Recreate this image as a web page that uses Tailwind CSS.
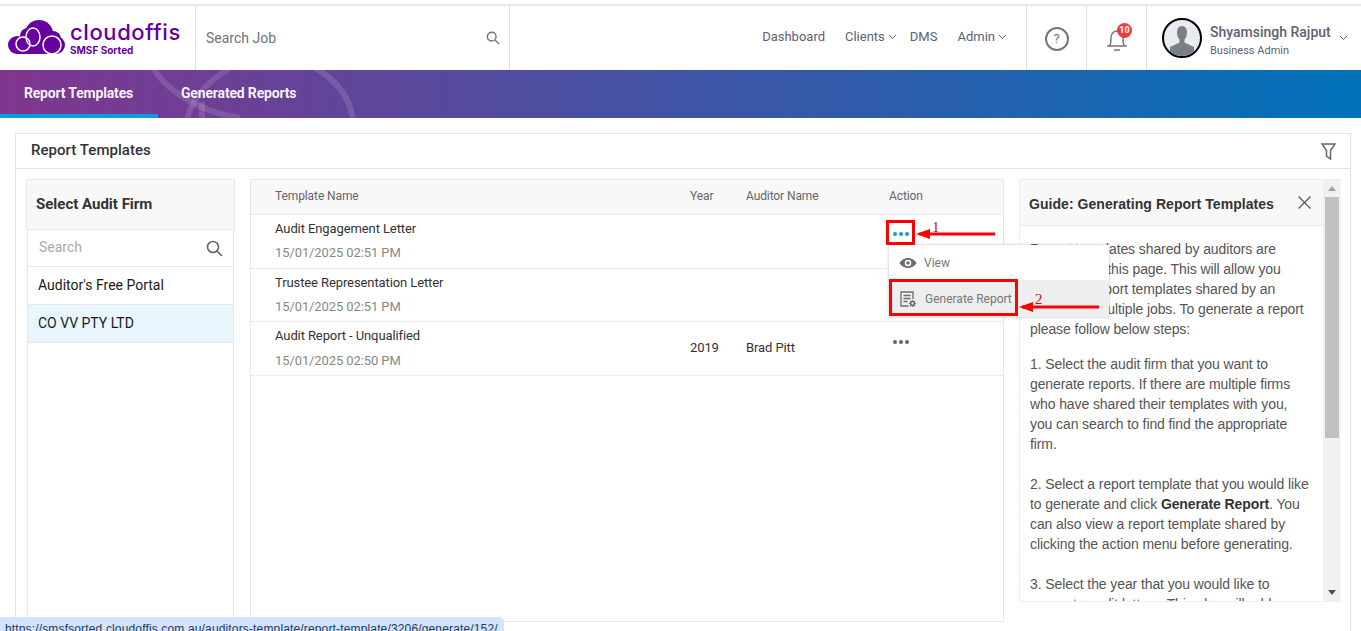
<!DOCTYPE html>
<html><head><meta charset="utf-8"><script src="https://cdn.jsdelivr.net/npm/@tailwindcss/browser@4"></script></head>
<body class="bg-white overflow-hidden font-['Roboto',sans-serif]">
<div class="relative w-[1361px] h-[631px] overflow-hidden bg-white">
  <div class="h-[6px] border-b-2 border-[#e5e5e5]"></div>
  <header class="h-[64px] flex items-stretch">
    <div class="w-[196px] border-r border-[#e0e0e0] flex items-center pl-[8px] relative">
      <svg width="58" height="36" viewBox="0 0 58 36" class="shrink-0 mt-[-3px]">
        <g fill="#6600a1"><circle cx="9" cy="26" r="9"/><circle cx="20" cy="17" r="8"/><circle cx="31" cy="15" r="14"/><circle cx="45" cy="20" r="8"/><circle cx="48" cy="26" r="9"/><rect x="9" y="22" width="39" height="13"/></g>
        <g fill="none" stroke="#fff" stroke-width="1.500"><circle cx="15" cy="25" r="7"/><ellipse cx="25" cy="18" rx="7" ry="9"/><circle cx="44" cy="26" r="9"/></g>
      </svg>
      <div class="ml-[4px] mt-[-1px]">
        <div class="text-[22px] leading-[24px] tracking-[0.6px] font-medium text-[#6600a1] font-['Inter',sans-serif]">cloudoffis</div>
        <div class="text-[10px] leading-[11px] mt-[1px] font-bold text-[#6600a1] font-['Inter',sans-serif]">SMSF Sorted</div>
      </div>
    </div>
    <div class="w-[314px] border-r border-[#e0e0e0] flex items-center justify-between pl-[10px] pr-[9px] text-[14px] text-[#6b7280]">
      <span>Search Job</span>
      <svg width="14" height="14" viewBox="0 0 16 16" fill="none" stroke="#6b7280" stroke-width="1.600"><circle cx="6.500" cy="6.500" r="5"/><path d="M10.500 10.500 15 15"/></svg>
    </div>
    <nav class="flex-1 flex items-center justify-end text-[13px] text-[#5c6273] pr-[19px] pb-[2px]">
      <span>Dashboard</span>
      <span class="ml-[20px] flex items-center gap-[3px]">Clients<svg width="9" height="6" viewBox="0 0 9 6" fill="none" stroke="#5c6273"><path d="M1 1l3.500 3.500L8 1"/></svg></span>
      <span class="ml-[13px]">DMS</span>
      <span class="ml-[20px] flex items-center gap-[3px]">Admin<svg width="9" height="6" viewBox="0 0 9 6" fill="none" stroke="#5c6273"><path d="M1 1l3.500 3.500L8 1"/></svg></span>
    </nav>
    <div class="w-[61px] border-x border-[#e0e0e0] flex items-center justify-center">
      <div class="w-[24px] h-[24px] rounded-full border-2 border-[#777] flex items-center justify-center text-[13px] text-[#777] mt-[2px]">?</div>
    </div>
    <div class="w-[60px] border-r border-[#e0e0e0] flex items-center justify-center relative">
      <svg class="mt-[2px]" width="22" height="26" viewBox="0 0 22 26" fill="none" stroke="#777" stroke-width="1.500"><path d="M1 20h20M3.500 20c1.500-2 1.500-4 1.500-8 0-4 2.500-7 6-7s6 3 6 7c0 4 0 6 1.500 8"/><path d="M8 24h6"/></svg>
      <span class="absolute left-[30px] top-[17px] w-[15px] h-[15px] rounded-full bg-[#ef3b3b] text-white text-[9px] font-bold flex items-center justify-center">10</span>
    </div>
    <div class="w-[214px] flex items-center pl-[15px]">
      <div class="w-[40px] h-[40px] rounded-full border-2 border-black bg-[#e9ebee] overflow-hidden shrink-0">
        <svg viewBox="0 0 36 36" class="w-full h-full"><path d="M18 6c-3.500 0-5 3-5 6.500 0 3 1 5.500 2.500 7v3L6 27v9h24v-9l-9.500-4.500v-3c1.500-1.500 2.500-4 2.500-7C23 9 21.500 6 18 6z" fill="#7a8087"/></svg>
      </div>
      <div class="ml-[8px] w-[129px] pt-[4px]">
        <div class="text-[14px] leading-[18px] font-medium text-[#5c6273] whitespace-nowrap">Shyamsingh Rajput</div>
        <div class="text-[11px] leading-[14px] mt-[3px] text-[#5c6273]">Business Admin</div>
      </div>
      <svg width="9" height="6" viewBox="0 0 9 6" fill="none" stroke="#5c6273"><path d="M1 1l3.500 3.500L8 1"/></svg>
    </div>
  </header>
  <div class="relative h-[48px] flex overflow-hidden bg-[linear-gradient(to_right,#80368f,#0071b9)]">
    <svg class="absolute left-[130px] top-0" width="240" height="48" fill="none" stroke="#fff" stroke-opacity=".13" stroke-width="6"><path d="M23-2C38 22 70 42 110 48"/><path d="M57 50C62 26 80 10 100-2"/><path d="M72 50V32"/><path d="M185-2C206 10 220 28 223 50"/></svg>
    <div class="relative w-[158px] h-full flex items-center justify-center border-b-4 border-[#0a9be2] text-[14px] font-bold text-white/95 tracking-[-0.17px]"><span class="mt-[3px] ml-[-1px]">Report Templates</span></div>
    <div class="relative ml-[23px] h-full flex items-center text-[14px] font-bold text-white/95 tracking-[-0.17px]"><span class="mt-[-2px]">Generated Reports</span></div>
  </div>
  <main class="mt-[15px] ml-[15px] w-[1336px] h-[520px] border border-[#e2e2e2]">
    <div class="h-[35px] border-b border-[#e2e2e2] flex items-center justify-between pl-[15px] pr-[14px]">
      <span class="text-[15px] font-medium text-[#333] mt-[-2px] tracking-[0.05px]">Report Templates</span>
      <svg width="15" height="17" viewBox="0 0 15 17" fill="none" stroke="#666" stroke-width="1.500"><path d="M1 1h13L9.500 7.500V16l-4-3V7.500z"/></svg>
    </div>
    <div class="flex items-start pt-[10px] pl-[10px]">
      <aside class="w-[209px] h-[460px] shrink-0">
        <div class="h-[51px] bg-[#f8f8f8] border border-[#e9e9e9] flex items-center pl-[9px] text-[15px] font-bold text-[#333]">Select Audit Firm</div>
        <div class="ml-[1px] w-[207px] h-[409px] border-x border-[#e7e7ec]">
          <div class="h-[37px] border-b border-[#e7e7ec] flex items-center justify-between pl-[11px] pr-[10px] text-[14px] text-[#aaa]">
            <span class="mt-[-2px]">Search</span>
            <svg width="17" height="17" viewBox="0 0 17 17" fill="none" stroke="#5f6670" stroke-width="1.600"><circle cx="7" cy="7" r="5.500"/><path d="M11 11l5 5"/></svg>
          </div>
          <div class="h-[38px] border-b border-[#e7e7ec] flex items-center pl-[10px] text-[14px] text-[#1a1a1a]">Auditor's Free Portal</div>
          <div class="h-[38px] border-b border-[#e7e7ec] bg-[#eaf6fd] flex items-center pl-[10px] text-[14px] text-[#1a1a1a]">CO VV PTY LTD</div>
        </div>
      </aside>
      <section class="ml-[15px] w-[754px] h-[443px] border border-[#e7e7e7] shrink-0 tracking-[-0.1px]">
        <div class="h-[35px] bg-[#f8f8f8] border-b border-[#e9e9e9] flex items-center text-[12px] text-[#666] pb-[2px]">
          <span class="ml-[24px] w-[415px]">Template Name</span><span class="w-[56px]">Year</span><span class="w-[143px]">Auditor Name</span><span>Action</span>
        </div>
        <div class="h-[54px] border-b border-dotted border-[#ddd] pl-[24px] pt-[6px]">
          <div class="text-[13px] leading-[16px] text-[#333]">Audit Engagement Letter</div>
          <div class="text-[13px] leading-[16px] mt-[8px] text-[#888]">15/01/2025 02:51 PM</div>
        </div>
        <div class="h-[53px] border-b border-dotted border-[#ddd] pl-[24px] pt-[6px]">
          <div class="text-[13px] leading-[16px] text-[#333]">Trustee Representation Letter</div>
          <div class="text-[13px] leading-[16px] mt-[8px] text-[#888]">15/01/2025 02:51 PM</div>
        </div>
        <div class="relative h-[54px] border-b border-dotted border-[#ddd] pl-[24px] pt-[6px] flex">
          <div class="w-[415px]">
            <div class="text-[13px] leading-[16px] text-[#333]">Audit Report - Unqualified</div>
            <div class="text-[13px] leading-[16px] mt-[9px] text-[#888]">15/01/2025 02:50 PM</div>
          </div>
          <span class="w-[56px] text-[13px] text-[#333] mt-[10px]">2019</span>
          <span class="text-[13px] text-[#333] mt-[10px]">Brad Pitt</span>
          <span class="absolute left-[642px] top-[18px] flex gap-[2px]"><i class="w-[4px] h-[4px] rounded-full bg-[#666]"></i><i class="w-[4px] h-[4px] rounded-full bg-[#666]"></i><i class="w-[4px] h-[4px] rounded-full bg-[#666]"></i></span>
        </div>
      </section>
      <section class="ml-[15px] w-[322px] h-[423px] shrink-0 flex border border-[#eee] border-r-0 bg-[#f7f7f7]">
        <div class="w-[303px] bg-white overflow-hidden">
          <div class="h-[46px] bg-[#f8f8f8] border-b border-[#e7e7ec] flex items-center justify-between pl-[9px] pr-[12px] pt-[4px] font-['Liberation_Sans',sans-serif] text-[14px] tracking-[0.05px] font-bold text-[#333]">
            <span>Guide: Generating Report Templates</span>
            <svg class="mt-[-4px]" width="13" height="13" viewBox="0 0 13 13" fill="none" stroke="#556" stroke-width="1.200"><path d="M.5.5l12 12M12.500.5l-12 12"/></svg>
          </div>
          <div class="pl-[10px] pr-[8px] pt-[13px] font-['Liberation_Sans',sans-serif] text-[14px] leading-[20px] tracking-[-0.1px] text-[#555] whitespace-nowrap">
            <p>Report templates shared by auditors are</p>
            <p>available on this page. This will allow you</p>
            <p>to access report templates shared by an</p>
            <p>auditor for multiple jobs. To generate a report</p>
            <p>please follow below steps:</p>
            <p class="mt-[15px]">1. Select the audit firm that you want to</p>
            <p>generate reports. If there are multiple firms</p>
            <p>who have shared their templates with you,</p>
            <p>you can search to find find the appropriate</p>
            <p>firm.</p>
            <p class="mt-[20px]">2. Select a report template that you would like</p>
            <p>to generate and click <b class="text-[#333]">Generate Report</b>. You</p>
            <p>can also view a report template shared by</p>
            <p>clicking the action menu before generating.</p>
            <p class="mt-[20px]">3. Select the year that you would like to</p>
            <p>generate audit letters. This also will add</p>
          </div>
        </div>
        <div class="w-[17px] relative bg-[#f1f1f1] flex flex-col items-center">
          <svg class="mt-[6px]" width="8" height="5"><path d="M4 0l4 5H0z" fill="#a3a3a3"/></svg>
          <div class="w-[14px] h-[241px] mt-[6px] bg-[#c1c1c1]"></div>
          <svg class="absolute bottom-[6px]" width="8" height="5"><path d="M0 0h8L4 5z" fill="#505050"/></svg>
        </div>
      </section>
    </div>
  </main>

  <!-- dropdown -->
  <div class="absolute left-[889px] top-[245px] w-[220px] h-[72px] bg-white shadow-[0_0_3px_rgba(0,0,0,.25)]">
    <div class="h-[35px] flex items-center text-[12px] text-[#777]">
      <svg class="ml-[10px]" width="18" height="12" viewBox="0 0 18 12"><path d="M9 1C5 1 2 3.500.5 6 2 8.500 5 11 9 11s7-2.500 8.500-5C16 3.500 13 1 9 1z" fill="#6d6d6d"/><circle cx="9" cy="6" r="3.300" fill="#fff"/><circle cx="9" cy="6" r="1.800" fill="#6d6d6d"/></svg>
      <span class="ml-[7px]">View</span>
    </div>
    <div class="h-[37px] bg-[#eeeeee] flex items-center text-[12px] text-[#777]">
      <svg class="ml-[11px]" width="16" height="16" viewBox="0 0 16 16" fill="none" stroke="#6d6d6d" stroke-width="1.300"><path d="M13 8V1H1v14h7.500"/><path d="M3.500 4.500h7M3.500 7.500h7M3.500 10.500h4"/><circle cx="12.500" cy="12.500" r="1.900" stroke-width="1.500"/><path d="M12.500 9v1M12.500 15v1M9 12.500h1M15 12.500h1M10 10l.7.700M14.300 14.300l.7.700M15 10l-.7.700M10.700 14.300l-.7.700" stroke-width="1.200"/></svg>
      <span class="ml-[9px]">Generate Report</span>
    </div>
  </div>
  <!-- annotations -->
  <div class="absolute left-[886px] top-[220px] w-[29px] h-[25px] border-[3px] border-[#f00] flex items-center justify-center gap-[2px] pt-[2px]"><i class="w-[4px] h-[4px] rounded-full bg-[#0a9be2]"></i><i class="w-[4px] h-[4px] rounded-full bg-[#0a9be2]"></i><i class="w-[4px] h-[4px] rounded-full bg-[#0a9be2]"></i></div>
  <div class="absolute left-[889px] top-[279px] w-[129px] h-[37px] border-[3px] border-[#f00]"></div>
  <svg class="absolute left-[915px] top-[225px]" width="85" height="17"><path d="M4 9H80" stroke="#f00" stroke-width="3"/><path d="M1 9l14-5v10z" fill="#f00"/></svg>
  <svg class="absolute left-[1018px] top-[298px]" width="85" height="17"><path d="M4 9H81" stroke="#f00" stroke-width="3"/><path d="M1 9l14-5v10z" fill="#f00"/></svg>
  <span class="absolute left-[932px] top-[219px] text-[15px] leading-[16px] text-[#d01010] font-['Liberation_Serif',serif]">1</span>
  <span class="absolute left-[1035px] top-[291px] text-[15px] leading-[16px] text-[#d01010] font-['Liberation_Serif',serif]">2</span>
  <!-- status bubble -->
  <div class="absolute left-0 top-[617px] w-[504px] h-[20px] bg-[#d3e3fd] rounded-tr-[5px] pl-[5px] pt-[3px] text-[12px] leading-[18px] tracking-[0.15px] text-[#1f3a5f] font-['Liberation_Sans',sans-serif] whitespace-nowrap">https://smsfsorted.cloudoffis.com.au/auditors-template/report-template/3206/generate/152/</div>
</div>
</body></html>
